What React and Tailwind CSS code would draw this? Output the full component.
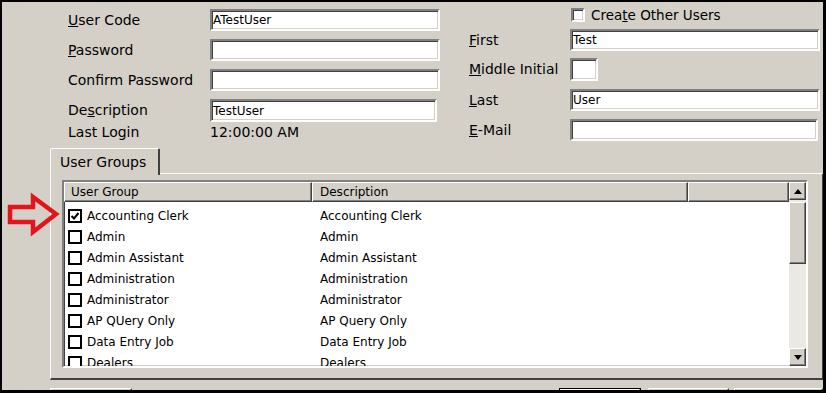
import React from "react";

const sunken =
  "border-2 border-t-[#808080] border-l-[#808080] border-r-white border-b-white shadow-[inset_1px_1px_0_#404040,inset_-1px_-1px_0_#d4d0c8]";
const raised =
  "border border-t-white border-l-white border-r-[#404040] border-b-[#404040] shadow-[inset_-1px_-1px_0_#808080]";

const groups = [
  { name: "Accounting Clerk", desc: "Accounting Clerk", checked: true },
  { name: "Admin", desc: "Admin" },
  { name: "Admin Assistant", desc: "Admin Assistant" },
  { name: "Administration", desc: "Administration" },
  { name: "Administrator", desc: "Administrator" },
  { name: "AP QUery Only", desc: "AP Query Only" },
  { name: "Data Entry Job", desc: "Data Entry Job" },
  { name: "Dealers", desc: "Dealers" },
];

// text box in the classic windows look
function Field({ value, className = "" }) {
  return (
    <div
      className={`${sunken} bg-white h-[22px] flex items-center px-[1px] text-[12px] leading-none ${className}`}
    >
      {value}
    </div>
  );
}

function Check({ checked }) {
  return (
    <div className="w-[14px] h-[14px] border-2 border-black bg-white flex items-center justify-center shrink-0">
      {checked && (
        <svg width="10" height="10" viewBox="0 0 10 10">
          <path d="M1.5 5 L4 7.5 L8.5 2" fill="none" stroke="#000" strokeWidth="2" />
        </svg>
      )}
    </div>
  );
}

function Arrow({ up }) {
  return (
    <div className={`${raised} bg-[#d4d0c8] h-[18px] flex items-center justify-center`}>
      <svg width="8" height="5" viewBox="0 0 8 5">
        <path d={up ? "M0 5 L4 0 L8 5 Z" : "M0 0 L4 5 L8 0 Z"} fill="#000" />
      </svg>
    </div>
  );
}

export default function App() {
  return (
    <div className="relative w-[826px] h-[393px] overflow-hidden border-t-2 border-l-2 border-r-[3px] border-b-[3px] border-black bg-[#d4d0c8] font-['DejaVu_Sans',sans-serif] text-black">
      {/* top form */}
      <div className="h-[146px] flex">
        <div className="pl-[66px] pt-[7px] w-[467px] flex flex-col text-[14px]">
          <div className="flex items-center h-[22px]">
            <span className="w-[142px]">
              <u>U</u>ser Code
            </span>
            <Field value="ATestUser" className="w-[230px]" />
          </div>
          <div className="flex items-center h-[22px] mt-2">
            <span className="w-[142px]">
              <u>P</u>assword
            </span>
            <Field className="w-[230px]" />
          </div>
          <div className="flex items-center h-[22px] mt-2">
            <span className="w-[142px]">Confirm Password</span>
            <Field className="w-[230px]" />
          </div>
          <div className="flex items-center h-[23px] mt-2">
            <span className="w-[142px]">
              De<u>s</u>cription
            </span>
            <Field value="TestUser" className="w-[227px] h-[23px]" />
          </div>
          <div className="flex items-center h-[18px] mt-[1px]">
            <span className="w-[142px]">Last Login</span>
            <span>12:00:00 AM</span>
          </div>
        </div>

        <div className="pt-[6px] flex flex-col text-[14px]">
          <div className="flex items-center h-[14px] pl-[102px] gap-[6px]">
            <div className={`${sunken} w-[14px] h-[14px] bg-white`} />
            <span className="text-[13.5px]">
              Crea<u>t</u>e Other Users
            </span>
          </div>
          <div className="flex items-center h-[22px] mt-[7px]">
            <span className="w-[101px]">
              <u>F</u>irst
            </span>
            <Field value="Test" className="w-[250px]" />
          </div>
          <div className="flex items-center h-[23px] mt-[7px]">
            <span className="w-[101px]">
              <u>M</u>iddle Initial
            </span>
            <Field className="w-[28px] h-[23px]" />
          </div>
          <div className="flex items-center h-[22px] mt-2">
            <span className="w-[101px]">
              <u>L</u>ast
            </span>
            <Field value="User" className="w-[250px]" />
          </div>
          <div className="flex items-center h-[22px] mt-2">
            <span className="w-[101px]">
              <u>E</u>-Mail
            </span>
            <Field className="w-[248px]" />
          </div>
        </div>
      </div>

      {/* tab strip */}
      <div className="pl-[48px] h-[25px] flex">
        <div className="relative z-10 w-[110px] h-[27px] bg-[#d4d0c8] border-t border-l border-t-white border-l-white border-r-2 border-r-[#404040] rounded-tl-[2px] rounded-tr-[2px] flex items-center pl-[9px] pt-[1px] text-[14px]">
          User Groups
        </div>
      </div>

      {/* tab panel */}
      <div className="ml-[48px] w-[774px] h-[207px] border-t border-l border-t-white border-l-white border-r-2 border-b-2 border-r-[#404040] border-b-[#404040] pl-[11px] pt-[6px]">
        <div className={`${sunken} w-[746px] h-[188px] bg-white flex text-[12px]`}>
          <div className="w-[725px] overflow-hidden">
            <div className="flex h-[20px]">
              <div className={`${raised} bg-[#d4d0c8] w-[248px] flex items-center pl-[6px]`}>User Group</div>
              <div className={`${raised} bg-[#d4d0c8] w-[376px] flex items-center pl-[7px]`}>Description</div>
              <div className={`${raised} bg-[#d4d0c8] w-[101px]`} />
            </div>
            <div className="pt-[3px]">
              {groups.map((g) => (
                <div key={g.name} className="flex items-center h-[21px]">
                  <div className="w-[248px] flex items-center pl-[4px] gap-[5px]">
                    <Check checked={g.checked} />
                    <span>{g.name}</span>
                  </div>
                  <div className="pl-[8px]">{g.desc}</div>
                </div>
              ))}
            </div>
          </div>
          <div className="w-[17px] flex flex-col bg-[#ebe9e4]">
            <Arrow up />
            <div className={`${raised} bg-[#d4d0c8] h-[62px] mt-[2px]`} />
            <div className="flex-1" />
            <Arrow />
          </div>
        </div>
      </div>

      {/* dialog buttons, mostly cut off */}
      <div className="flex mt-[8px] h-[24px]">
        <div className={`${raised} bg-[#d4d0c8] ml-[48px] w-[83px]`} />
        <div className="ml-[427px] w-[83px] border border-black">
          <div className={`${raised} bg-[#d4d0c8] h-full`} />
        </div>
        <div className={`${raised} bg-[#d4d0c8] ml-[7px] w-[83px]`} />
        <div className={`${raised} bg-[#d4d0c8] ml-[5px] w-[90px]`} />
      </div>

      {/* red pointer arrow */}
      <svg className="absolute left-0 top-[190px]" width="64" height="50" viewBox="0 0 64 50">
        <polygon
          points="8,15 31,15 31,5 54,22 31,40 31,30 8,30"
          fill="none"
          stroke="#e3141c"
          strokeWidth="4.5"
          strokeLinejoin="miter"
        />
      </svg>
    </div>
  );
}
